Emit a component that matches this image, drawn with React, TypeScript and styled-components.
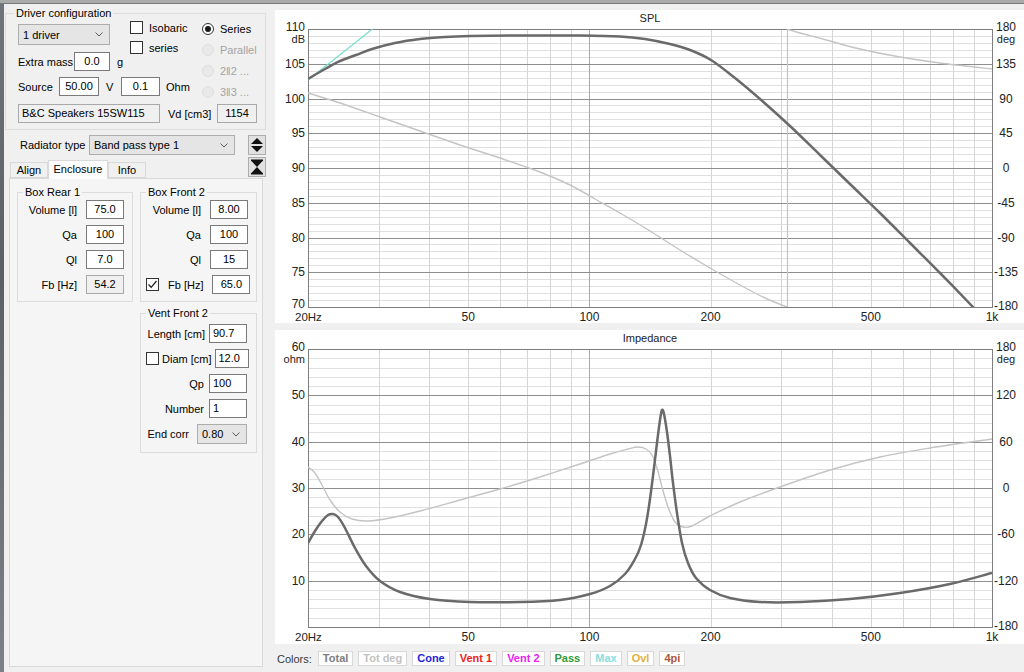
import React from 'react';
import styled, { createGlobalStyle } from 'styled-components';

const GlobalStyle = createGlobalStyle`
  html, body { margin: 0; padding: 0; background: #f0f0f0; }
  body { font-family: "Liberation Sans", Arial, sans-serif; font-size: 11px; color: #000; }
  * { box-sizing: border-box; }
`;

const Screen = styled.div`
  width: 1024px;
  height: 672px;
  overflow: hidden;
  display: flex;
  flex-direction: column;
  background: #f0f0f0;
`;

const TopEdge = styled.div`
  height: 4px;
  flex: none;
  background: #aaaaaa;
  border-bottom: 1px solid #7a7a7a;
`;

const Body = styled.div`
  flex: 1;
  display: flex;
  min-height: 0;
`;

const BackWindow = styled.div`
  width: 4px;
  flex: none;
  background: linear-gradient(#70757c, #5b6066 40%, #7c8088);
`;

const LeftPane = styled.div`
  width: 263px;
  flex: none;
  display: flex;
  flex-direction: column;
  padding: 3px 0 0 1px;
`;

const Group = styled.fieldset<{ $w: number }>`
  margin: 0;
  padding: 0;
  min-width: 0;
  width: ${p => p.$w}px;
  border: 1px solid #dcdcdc;
`;

const Caption = styled.legend<{ $indent: number }>`
  padding: 0 2px;
  margin-left: ${p => p.$indent}px;
  font-size: 11px;
  line-height: 13px;
`;

const DriverBody = styled.div`
  padding: 0 6px 6px 12px;
  display: flex;
  flex-direction: column;
`;

const TopArea = styled.div`
  display: flex;
`;

const LeftCol = styled.div`
  width: 184px;
  display: flex;
  flex-direction: column;
`;

const UpperRow = styled.div`
  display: flex;
`;

const SubCol = styled.div`
  width: 112px;
  display: flex;
  flex-direction: column;
  padding-top: 4px;
  gap: 7px;
`;

const CheckCol = styled.div`
  display: flex;
  flex-direction: column;
  padding-top: 1px;
  gap: 7px;
`;

const RadioCol = styled.div`
  display: flex;
  flex-direction: column;
  padding-top: 2px;
  gap: 8px;
`;

const Line = styled.div<{ $mt?: number; $h?: number }>`
  display: flex;
  align-items: center;
  height: ${p => p.$h ?? 19}px;
  margin-top: ${p => p.$mt ?? 0}px;
`;

const Option = styled.div<{ $off?: boolean }>`
  display: flex;
  align-items: center;
  gap: 6px;
  height: 13px;
  color: ${p => (p.$off ? '#a3a3a3' : '#000')};
`;

const Label = styled.span<{ $w?: number; $ml?: number }>`
  ${p => (p.$w ? `width: ${p.$w}px;` : '')}
  margin-left: ${p => p.$ml ?? 0}px;
  white-space: nowrap;
  flex: none;
`;

const Field = styled.div<{ $w: number; $align?: string; $ro?: boolean }>`
  width: ${p => p.$w}px;
  height: 19px;
  flex: none;
  border: 1px solid ${p => (p.$ro ? '#a9a9a9' : '#7a7a7a')};
  background: ${p => (p.$ro ? '#f0f0f0' : '#ffffff')};
  line-height: 17px;
  padding: 0 3px;
  text-align: ${p => p.$align ?? 'center'};
  white-space: nowrap;
  overflow: hidden;
`;

const SelectBox = styled.div<{ $w: number; $h?: number }>`
  width: ${p => p.$w}px;
  height: ${p => p.$h ?? 20}px;
  flex: none;
  background: #e5e5e5;
  border: 1px solid #adadad;
  display: flex;
  align-items: center;
  justify-content: space-between;
  padding: 0 6px 0 4px;
`;

const CheckBox = styled.span`
  width: 13px;
  height: 13px;
  flex: none;
  border: 1px solid #333;
  background: #fff;
  display: inline-flex;
  align-items: center;
  justify-content: center;
`;

const RadioDot = styled.span<{ $on?: boolean; $off?: boolean }>`
  width: 12px;
  height: 12px;
  flex: none;
  border-radius: 50%;
  border: 1px solid ${p => (p.$off ? '#dedede' : '#333')};
  background: ${p => (p.$off ? '#e9e9e9' : '#fff')};
  display: inline-flex;
  align-items: center;
  justify-content: center;
  &::after {
    content: '';
    width: 6px;
    height: 6px;
    border-radius: 50%;
    background: #1a1a1a;
    display: ${p => (p.$on ? 'block' : 'none')};
  }
`;

const ControlRow = styled.div`
  display: flex;
  margin-top: 5px;
`;

const ControlLeft = styled.div`
  width: 243px;
  display: flex;
  flex-direction: column;
`;

const RadiatorLine = styled.div`
  display: flex;
  align-items: center;
  height: 20px;
  padding-left: 15px;
`;

const ButtonCol = styled.div`
  display: flex;
  flex-direction: column;
  gap: 2px;
`;

const IconButton = styled.div`
  width: 18px;
  height: 20px;
  background: #e1e1e1;
  border: 1px solid #adadad;
  display: flex;
  align-items: center;
  justify-content: center;
`;

const TabStrip = styled.div`
  display: flex;
  align-items: flex-end;
  height: 18px;
  margin-top: 5px;
  padding-left: 5px;
`;

const Tab = styled.div<{ $active?: boolean; $w: number }>`
  width: ${p => p.$w}px;
  height: ${p => (p.$active ? 19 : 16)}px;
  margin-bottom: ${p => (p.$active ? -1 : 0)}px;
  position: relative;
  z-index: ${p => (p.$active ? 2 : 1)};
  background: ${p => (p.$active ? '#fcfcfc' : '#f0f0f0')};
  border: 1px solid #d9d9d9;
  border-bottom: ${p => (p.$active ? 'none' : '1px solid #d9d9d9')};
  display: flex;
  align-items: center;
  justify-content: center;
  padding-bottom: ${p => (p.$active ? 2 : 0)}px;
`;

const TabPage = styled.div`
  flex: 1;
  margin: 0 0 5px 4px;
  width: 254px;
  border: 1px solid #d9d9d9;
  background: #f5f5f5;
  padding: 7px 0 0 7px;
  display: grid;
  grid-template-columns: 116px 117px;
  grid-auto-rows: min-content;
  column-gap: 7px;
  row-gap: 5px;
`;

const BoxBody = styled.div<{ $pt: number; $pr: number; $pb: number }>`
  display: flex;
  flex-direction: column;
  gap: 6px;
  padding: ${p => `${p.$pt}px ${p.$pr}px ${p.$pb}px 5px`};
`;

const ParamRow = styled.div<{ $gap: number; $h?: number }>`
  display: flex;
  align-items: center;
  height: ${p => p.$h ?? 19}px;
  gap: ${p => p.$gap}px;
`;

const RowLabel = styled.span`
  flex: 1;
  text-align: right;
  white-space: nowrap;
`;

const RightPane = styled.div`
  flex: 1;
  display: flex;
  flex-direction: column;
  padding: 6px 0 0 8px;
  gap: 7px;
`;

const ChartBox = styled.div<{ $h: number }>`
  width: 749px;
  height: ${p => p.$h}px;
  background: #ffffff;
  flex: none;
  svg {
    display: block;
    font-family: "Liberation Sans", Arial, sans-serif;
  }
`;

const LegendRow = styled.div`
  display: flex;
  align-items: center;
  height: 15px;
  padding-left: 2px;
  gap: 5px;
`;

const LegendLabel = styled.span`
  color: #3a3a3a;
  margin-right: 1px;
`;

const Swatch = styled.span<{ $c: string }>`
  height: 15px;
  padding: 0 4px;
  background: #fff;
  border: 1px solid #d8d8d8;
  color: ${p => p.$c};
  font-weight: bold;
  line-height: 13px;
  white-space: nowrap;
`;

/* ---------- small drawings ---------- */

const Chevron = () => (
  <svg width="8" height="5" viewBox="0 0 8 5">
    <polyline points="0.5,0.5 4,4 7.5,0.5" fill="none" stroke="#5a5a5a" strokeWidth="1" />
  </svg>
);

const Tick = () => (
  <svg width="11" height="11" viewBox="0 0 11 11">
    <polyline points="1.5,5.5 4.2,8.3 9.5,2" fill="none" stroke="#222" strokeWidth="1.3" />
  </svg>
);

const UpDownIcon = () => (
  <svg width="14" height="16" viewBox="0 0 14 16">
    <polygon points="1,7 7,1 13,7" fill="#111" />
    <polygon points="1,9 7,15 13,9" fill="#111" />
  </svg>
);

const HourglassIcon = () => (
  <svg width="14" height="16" viewBox="0 0 14 16">
    <rect x="1" y="0.5" width="12" height="1.6" fill="#111" />
    <polygon points="1.5,2 12.5,2 7,8" fill="#111" />
    <polygon points="7,8 1.5,14 12.5,14" fill="#111" />
    <rect x="1" y="13.9" width="12" height="1.6" fill="#111" />
  </svg>
);

const Check = ({ on }: { on?: boolean }) => <CheckBox>{on ? <Tick /> : null}</CheckBox>;

/* ---------- chart ---------- */

type Pt = [number, number];

function smooth(pts: Pt[]): string {
  let d = `M${pts[0][0]},${pts[0][1]}`;
  for (let i = 0; i < pts.length - 1; i++) {
    const p0 = pts[i - 1] || pts[i];
    const p1 = pts[i];
    const p2 = pts[i + 1];
    const p3 = pts[i + 2] || p2;
    const c1x = p1[0] + (p2[0] - p0[0]) / 6;
    const c1y = p1[1] + (p2[1] - p0[1]) / 6;
    const c2x = p2[0] - (p3[0] - p1[0]) / 6;
    const c2y = p2[1] - (p3[1] - p1[1]) / 6;
    d += ` C${c1x.toFixed(1)},${c1y.toFixed(1)} ${c2x.toFixed(1)},${c2y.toFixed(1)} ${p2[0]},${p2[1]}`;
  }
  return d;
}

const PL = 308;
const PR = 992;
const PH = 278;
const fx = (f: number) => PL + ((PR - PL) * Math.log10(f / 20)) / Math.log10(50);
const FREQS = [30, 40, 50, 60, 70, 80, 90, 100, 200, 300, 400, 500, 600, 700, 800, 900];
const FLABELS: [number, string][] = [
  [50, '50'],
  [100, '100'],
  [200, '200'],
  [500, '500'],
];

interface Curve {
  d: string;
  color: string;
  width: number;
}

interface ChartProps {
  id: string;
  panelY: number;
  panelH: number;
  top: number;
  title: string;
  titleY: number;
  divs: number;
  minorsPer: number;
  left: string[];
  right: string[];
  leftUnit: string;
  curves: Curve[];
}

const Chart = ({ id, panelY, panelH, top, title, titleY, divs, minorsPer, left, right, leftUnit, curves }: ChartProps) => {
  const bottom = top + PH;
  const step = PH / divs;
  const minors: number[] = [];
  for (let i = 0; i < divs; i++) {
    for (let k = 1; k < minorsPer; k++) minors.push(top + i * step + (k * step) / minorsPer);
  }
  const crisp = (v: number) => Math.round(v) + 0.5;
  const offL = (i: number) => (i === 0 ? 2 : i === divs ? 1 : 4);
  const offR = (i: number) => (i === 0 ? 2 : i === divs ? 3 : 4);
  return (
    <ChartBox $h={panelH}>
      <svg width="749" height={panelH} viewBox={`275 ${panelY} 749 ${panelH}`}>
        <defs>
          <clipPath id={id}>
            <rect x={PL} y={top} width={PR - PL} height={PH} />
          </clipPath>
        </defs>
        <text x={650} y={titleY} fontSize="11" textAnchor="middle" fill="#222">
          {title}
        </text>
        {minors.map((y, i) => (
          <line key={`m${i}`} x1={PL} x2={PR} y1={crisp(y)} y2={crisp(y)} stroke="#e0e0e0" strokeWidth="1" />
        ))}
        {FREQS.map(f => (
          <line
            key={`f${f}`}
            x1={crisp(fx(f))}
            x2={crisp(fx(f))}
            y1={top}
            y2={bottom}
            stroke={f === 100 ? '#a9a9a9' : '#d6d6d6'}
            strokeWidth="1"
          />
        ))}
        {Array.from({ length: divs + 1 }, (_, i) => (
          <line
            key={`M${i}`}
            x1={PL}
            x2={PR}
            y1={crisp(top + i * step)}
            y2={crisp(top + i * step)}
            stroke="#8e8e8e"
            strokeWidth="1"
          />
        ))}
        <rect x={PL + 0.5} y={crisp(top)} width={PR - PL} height={Math.round(PH)} fill="none" stroke="#7e7e7e" />
        <g clipPath={`url(#${id})`}>
          {curves.map((c, i) => (
            <path key={i} d={c.d} fill="none" stroke={c.color} strokeWidth={c.width} strokeLinejoin="round" />
          ))}
        </g>
        <g fontSize="12" fill="#222">
          {left.map((t, i) =>
            t ? (
              <text key={`l${i}`} x={305} y={top + i * step + offL(i)} textAnchor="end">
                {t}
              </text>
            ) : null
          )}
          <text x={305} y={top + 14} textAnchor="end" fontSize="11">
            {leftUnit}
          </text>
          {right.map((t, i) => (
            <text key={`r${i}`} x={1006} y={top + i * step + offR(i)} textAnchor="middle">
              {t}
            </text>
          ))}
          <text x={1006} y={top + 14} textAnchor="middle" fontSize="11">
            deg
          </text>
          <text x={295} y={bottom + 14} fontSize="11.5">
            20Hz
          </text>
          {FLABELS.map(([f, t]) => (
            <text key={t} x={fx(f)} y={bottom + 14} textAnchor="middle">
              {t}
            </text>
          ))}
          <text x={992} y={bottom + 14} textAnchor="middle">
            1k
          </text>
        </g>
      </svg>
    </ChartBox>
  );
};

const SPL_TOTAL: Pt[] = [
  [308, 79], [325, 69], [340, 61], [356, 55], [372, 49], [395, 43], [420, 39], [445, 37], [470, 36],
  [520, 35.5], [580, 35.5], [620, 36.5], [645, 39], [670, 44], [690, 50], [711, 60], [735, 78],
  [760, 99], [790, 126], [820, 155], [850, 184], [880, 213], [910, 243], [940, 273], [973, 307], [976, 311],
];

const SPL_PHASE: Pt[] = [
  [308, 93], [340, 103], [380, 117], [420, 131], [460, 145], [500, 158], [540, 172], [570, 185],
  [595, 199], [620, 213], [650, 231], [680, 250], [710, 268], [740, 285], [765, 298], [787, 307],
];

const SPL_PHASE2: Pt[] = [
  [787, 29], [800, 33], [830, 41], [860, 49], [900, 57], [940, 63], [992, 69],
];

const IMP_TOTAL: Pt[] = [
  [308, 543], [315, 531], [322, 521], [328, 515], [333, 514], [338, 517], [345, 528], [355, 548],
  [366, 566], [380, 581], [400, 592], [430, 599], [470, 602], [520, 602], [560, 600], [590, 594],
  [610, 586], [625, 574], [635, 559], [641, 545], [646, 524], [650, 499], [654, 468], [657, 443],
  [660, 420], [662, 410], [664, 414], [667, 432], [670, 456], [673, 483], [677, 513], [682, 543],
  [688, 563], [696, 578], [710, 590], [730, 598], [760, 602], [800, 602], [850, 599], [900, 593],
  [950, 584], [992, 573],
];

const IMP_PHASE: Pt[] = [
  [308, 467], [315, 473], [322, 485], [330, 500], [340, 512], [352, 519], [368, 521], [390, 518],
  [420, 511], [460, 500], [500, 489], [540, 477], [580, 464], [610, 454], [628, 449], [638, 447],
  [646, 449], [652, 455], [657, 468], [662, 487], [668, 507], [675, 522], [683, 527], [692, 526],
  [710, 516], [740, 502], [780, 487], [830, 470], [880, 457], [930, 448], [992, 439],
];

const LEGEND: [string, string][] = [
  ['Total', '#7d7d7d'],
  ['Tot deg', '#c2c2c2'],
  ['Cone', '#2424d8'],
  ['Vent 1', '#f01c1c'],
  ['Vent 2', '#f020f0'],
  ['Pass', '#2f9a3a'],
  ['Max', '#86dede'],
  ['Ovl', '#e0b040'],
  ['4pi', '#b0553a'],
];

export default function App() {
  const splCurves: Curve[] = [
    { d: smooth(SPL_PHASE), color: '#c4c4c4', width: 1.4 },
    { d: 'M787.5,307 L787.5,29', color: '#c4c4c4', width: 1.2 },
    { d: smooth(SPL_PHASE2), color: '#c4c4c4', width: 1.4 },
    { d: 'M308,80 L375,27', color: '#72e0cc', width: 1.2 },
    { d: smooth(SPL_TOTAL), color: '#6a6a6a', width: 2.5 },
  ];
  const impCurves: Curve[] = [
    { d: smooth(IMP_PHASE), color: '#c4c4c4', width: 1.4 },
    { d: smooth(IMP_TOTAL), color: '#6a6a6a', width: 2.5 },
  ];

  return (
    <>
      <GlobalStyle />
      <Screen>
        <TopEdge />
        <Body>
          <BackWindow />
          <LeftPane>
            <Group $w={261}>
              <Caption $indent={8}>Driver configuration</Caption>
              <DriverBody>
                <TopArea>
                  <LeftCol>
                    <UpperRow>
                      <SubCol>
                        <SelectBox $w={92} $h={21}>
                          <span>1 driver</span>
                          <Chevron />
                        </SelectBox>
                        <Line>
                          <Label $w={56}>Extra mass</Label>
                          <Field $w={36}>0.0</Field>
                          <Label $ml={7}>g</Label>
                        </Line>
                      </SubCol>
                      <CheckCol>
                        <Option>
                          <Check />
                          <span>Isobaric</span>
                        </Option>
                        <Option>
                          <Check />
                          <span>series</span>
                        </Option>
                      </CheckCol>
                    </UpperRow>
                    <Line $mt={6}>
                      <Label $w={41}>Source</Label>
                      <Field $w={40}>50.00</Field>
                      <Label $ml={7} $w={15}>
                        V
                      </Label>
                      <Field $w={39}>0.1</Field>
                      <Label $ml={6}>Ohm</Label>
                    </Line>
                  </LeftCol>
                  <RadioCol>
                    <Option>
                      <RadioDot $on />
                      <span>Series</span>
                    </Option>
                    <Option $off>
                      <RadioDot $off />
                      <span>Parallel</span>
                    </Option>
                    <Option $off>
                      <RadioDot $off />
                      <span>2‖2 ...</span>
                    </Option>
                    <Option $off>
                      <RadioDot $off />
                      <span>3‖3 ...</span>
                    </Option>
                  </RadioCol>
                </TopArea>
                <Line $mt={6}>
                  <Field $w={142} $align="left" $ro>
                    B&amp;C Speakers 15SW115
                  </Field>
                  <Label $ml={8} $w={49}>
                    Vd [cm3]
                  </Label>
                  <Field $w={40} $ro>
                    1154
                  </Field>
                </Line>
              </DriverBody>
            </Group>

            <ControlRow>
              <ControlLeft>
                <RadiatorLine>
                  <Label $w={69}>Radiator type</Label>
                  <SelectBox $w={146}>
                    <span>Band pass type 1</span>
                    <Chevron />
                  </SelectBox>
                </RadiatorLine>
                <TabStrip>
                  <Tab $w={38}>Align</Tab>
                  <Tab $w={60} $active>
                    Enclosure
                  </Tab>
                  <Tab $w={38}>Info</Tab>
                </TabStrip>
              </ControlLeft>
              <ButtonCol>
                <IconButton>
                  <UpDownIcon />
                </IconButton>
                <IconButton>
                  <HourglassIcon />
                </IconButton>
              </ButtonCol>
            </ControlRow>

            <TabPage>
              <Group $w={116}>
                <Caption $indent={5}>Box Rear 1</Caption>
                <BoxBody $pt={1} $pr={8} $pb={7}>
                  <ParamRow $gap={9}>
                    <RowLabel>Volume [l]</RowLabel>
                    <Field $w={38}>75.0</Field>
                  </ParamRow>
                  <ParamRow $gap={9}>
                    <RowLabel>Qa</RowLabel>
                    <Field $w={38}>100</Field>
                  </ParamRow>
                  <ParamRow $gap={9}>
                    <RowLabel>Ql</RowLabel>
                    <Field $w={38}>7.0</Field>
                  </ParamRow>
                  <ParamRow $gap={9}>
                    <RowLabel>Fb [Hz]</RowLabel>
                    <Field $w={38} $ro>
                      54.2
                    </Field>
                  </ParamRow>
                </BoxBody>
              </Group>

              <Group $w={117}>
                <Caption $indent={5}>Box Front 2</Caption>
                <BoxBody $pt={1} $pr={8} $pb={7}>
                  <ParamRow $gap={9}>
                    <RowLabel>Volume [l]</RowLabel>
                    <Field $w={38}>8.00</Field>
                  </ParamRow>
                  <ParamRow $gap={9}>
                    <RowLabel>Qa</RowLabel>
                    <Field $w={38}>100</Field>
                  </ParamRow>
                  <ParamRow $gap={9}>
                    <RowLabel>Ql</RowLabel>
                    <Field $w={38}>15</Field>
                  </ParamRow>
                  <ParamRow $gap={9}>
                    <Check on />
                    <RowLabel>Fb [Hz]</RowLabel>
                    <Field $w={38}>65.0</Field>
                  </ParamRow>
                </BoxBody>
              </Group>

              <span />
              <Group $w={117}>
                <Caption $indent={5}>Vent Front 2</Caption>
                <BoxBody $pt={4} $pr={9} $pb={8}>
                  <ParamRow $gap={4}>
                    <RowLabel>Length [cm]</RowLabel>
                    <Field $w={38} $align="left">
                      90.7
                    </Field>
                  </ParamRow>
                  <ParamRow $gap={3}>
                    <Check />
                    <RowLabel>Diam [cm]</RowLabel>
                    <Field $w={34} $align="left">
                      12.0
                    </Field>
                  </ParamRow>
                  <ParamRow $gap={5}>
                    <RowLabel>Qp</RowLabel>
                    <Field $w={38} $align="left">
                      100
                    </Field>
                  </ParamRow>
                  <ParamRow $gap={5}>
                    <RowLabel>Number</RowLabel>
                    <Field $w={38} $align="left">
                      1
                    </Field>
                  </ParamRow>
                  <ParamRow $gap={8} $h={20}>
                    <RowLabel>End corr</RowLabel>
                    <SelectBox $w={50}>
                      <span>0.80</span>
                      <Chevron />
                    </SelectBox>
                  </ParamRow>
                </BoxBody>
              </Group>
            </TabPage>
          </LeftPane>

          <RightPane>
            <Chart
              id="splclip"
              panelY={10}
              panelH={313}
              top={29}
              title="SPL"
              titleY={22}
              divs={8}
              minorsPer={5}
              left={['110', '105', '100', '95', '90', '85', '80', '75', '70']}
              right={['180', '135', '90', '45', '0', '-45', '-90', '-135', '-180']}
              leftUnit="dB"
              curves={splCurves}
            />
            <Chart
              id="impclip"
              panelY={330}
              panelH={314}
              top={349}
              title="Impedance"
              titleY={342}
              divs={6}
              minorsPer={5}
              left={['60', '50', '40', '30', '20', '10', '']}
              right={['180', '120', '60', '0', '-60', '-120', '-180']}
              leftUnit="ohm"
              curves={impCurves}
            />
            <LegendRow>
              <LegendLabel>Colors:</LegendLabel>
              {LEGEND.map(([t, c]) => (
                <Swatch key={t} $c={c}>
                  {t}
                </Swatch>
              ))}
            </LegendRow>
          </RightPane>
        </Body>
      </Screen>
    </>
  );
}
